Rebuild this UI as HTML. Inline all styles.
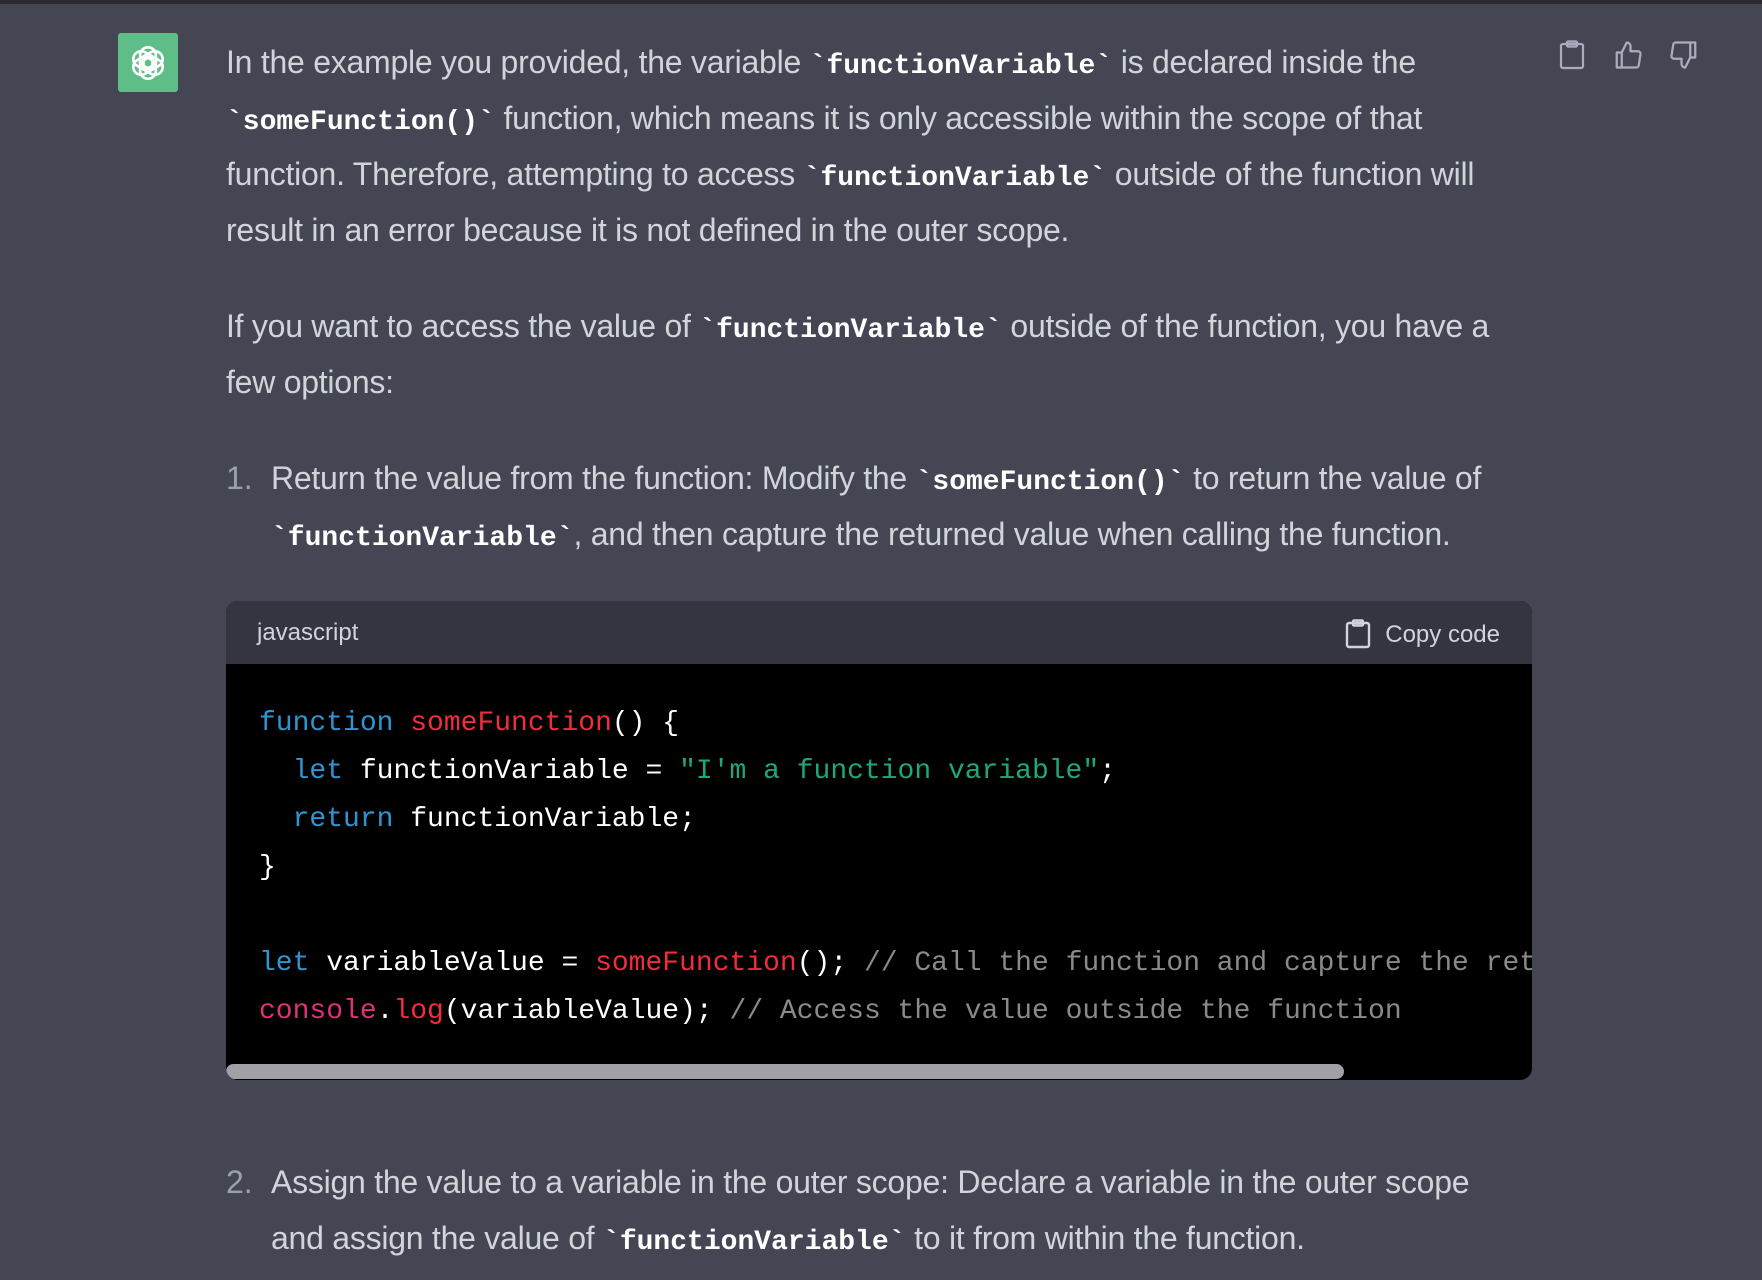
<!DOCTYPE html>
<html><head><meta charset="utf-8"><style>
html,body{margin:0;padding:0;}
body{width:1762px;height:1280px;overflow:hidden;background:#444654;font-family:"Liberation Sans",sans-serif;color:#d1d5db;position:relative;}
.top{position:absolute;left:0;top:0;width:1762px;height:4px;background:#2c2c30;}
.av{position:absolute;left:118px;top:33px;width:60px;height:59px;background:#5fbd87;border-radius:3px;display:flex;align-items:center;justify-content:center;}
.t{position:absolute;left:226px;font-size:32px;line-height:56px;white-space:nowrap;letter-spacing:-0.25px;}
code{font-family:"Liberation Mono",monospace;font-weight:bold;color:#fff;font-size:28px;letter-spacing:0;}
.num{position:absolute;left:226px;font-size:32px;line-height:56px;color:#9ca0a8;}
.cb{position:absolute;left:226px;top:601px;width:1306px;height:479px;border-radius:12px;overflow:hidden;background:#000;}
.hd{height:63px;background:#343541;position:relative;font-size:24px;}
.hd .l{position:absolute;left:31px;top:18px;}
.hd .r{position:absolute;right:32px;top:18px;}
.code{position:absolute;left:33px;top:99px;font-family:"Liberation Mono",monospace;font-size:28px;line-height:48px;color:#fff;white-space:pre;}
.k{color:#2e95d3}.f{color:#f22c3d}.s{color:#1fa77c}.c{color:#8a8a8a}.b{color:#df3079}
.sb{position:absolute;left:0;top:463px;width:1118px;height:15px;border-radius:8px;background:#a0a0a6;}
.ic{position:absolute;top:40px;}
</style></head><body>
<div class="top"></div>
<div class="av"><svg width="42" height="42" viewBox="0 0 24 24" fill="none" stroke="#fff" stroke-width="1.5"><circle cx="12" cy="12" r="3"/><path d="M12 3a4.5 4.5 0 0 1 4.5 4.5v5L12 15 7.5 12.5v-5A4.5 4.5 0 0 1 12 3z" transform="rotate(0 12 12)"/><path d="M12 3a4.5 4.5 0 0 1 4.5 4.5v5L12 15 7.5 12.5v-5A4.5 4.5 0 0 1 12 3z" transform="rotate(60 12 12)"/><path d="M12 3a4.5 4.5 0 0 1 4.5 4.5v5L12 15 7.5 12.5v-5A4.5 4.5 0 0 1 12 3z" transform="rotate(120 12 12)"/><path d="M12 3a4.5 4.5 0 0 1 4.5 4.5v5L12 15 7.5 12.5v-5A4.5 4.5 0 0 1 12 3z" transform="rotate(180 12 12)"/><path d="M12 3a4.5 4.5 0 0 1 4.5 4.5v5L12 15 7.5 12.5v-5A4.5 4.5 0 0 1 12 3z" transform="rotate(240 12 12)"/><path d="M12 3a4.5 4.5 0 0 1 4.5 4.5v5L12 15 7.5 12.5v-5A4.5 4.5 0 0 1 12 3z" transform="rotate(300 12 12)"/></svg></div>

<div class="t" style="top:34px">In the example you provided, the variable <code>`functionVariable`</code> is declared inside the</div>
<div class="t" style="top:90px"><code>`someFunction()`</code> function, which means it is only accessible within the scope of that</div>
<div class="t" style="top:146px">function. Therefore, attempting to access <code>`functionVariable`</code> outside of the function will</div>
<div class="t" style="top:202px">result in an error because it is not defined in the outer scope.</div>

<div class="t" style="top:298px">If you want to access the value of <code>`functionVariable`</code> outside of the function, you have a</div>
<div class="t" style="top:354px">few options:</div>

<div class="num" style="top:450px">1.</div>
<div class="t" style="top:450px;left:271px">Return the value from the function: Modify the <code>`someFunction()`</code> to return the value of</div>
<div class="t" style="top:506px;left:271px"><code>`functionVariable`</code>, and then capture the returned value when calling the function.</div>

<div class="cb">
 <div class="hd"><span class="l">javascript</span><span class="r"><svg width="26" height="30" viewBox="0 0 26 30" style="vertical-align:-7px;margin-right:14px" fill="none" stroke="#d1d5db" stroke-width="2.4"><rect x="2" y="4" width="22" height="24" rx="2"/><rect x="8" y="1.5" width="10" height="5" rx="1"/></svg>Copy code</span></div>
 <div class="code"><span class="k">function</span> <span class="f">someFunction</span>() {
  <span class="k">let</span> functionVariable = <span class="s">"I'm a function variable"</span>;
  <span class="k">return</span> functionVariable;
}

<span class="k">let</span> variableValue = <span class="f">someFunction</span>(); <span class="c">// Call the function and capture the returned value</span>
<span class="b">console</span>.<span class="f">log</span>(variableValue); <span class="c">// Access the value outside the function</span></div>
 <div class="sb"></div>
</div>

<div class="num" style="top:1154px">2.</div>
<div class="t" style="top:1154px;left:271px">Assign the value to a variable in the outer scope: Declare a variable in the outer scope</div>
<div class="t" style="top:1210px;left:271px">and assign the value of <code>`functionVariable`</code> to it from within the function.</div>

<svg class="ic" style="left:1558px" width="28" height="30" viewBox="0 0 26 30" fill="none" stroke="#acacbe" stroke-width="2.2"><rect x="2" y="4" width="22" height="24" rx="2"/><rect x="8" y="1.5" width="10" height="5" rx="1"/></svg>
<svg class="ic" style="left:1612px" width="32" height="30" viewBox="0 0 24 24" fill="none" stroke="#acacbe" stroke-width="1.8" stroke-linejoin="round"><path d="M7 10v12H3V10h4zM7 10l4-8a3 3 0 0 1 3 3v4h6a2 2 0 0 1 2 2.3l-1.4 9A2 2 0 0 1 18.6 22H7"/></svg>
<svg class="ic" style="left:1668px" width="32" height="30" viewBox="0 0 24 24" fill="none" stroke="#acacbe" stroke-width="1.8" stroke-linejoin="round"><path d="M17 14V2h4v12h-4zM17 14l-4 8a3 3 0 0 1-3-3v-4H4a2 2 0 0 1-2-2.3l1.4-9A2 2 0 0 1 5.4 2H17"/></svg>
</body></html>
